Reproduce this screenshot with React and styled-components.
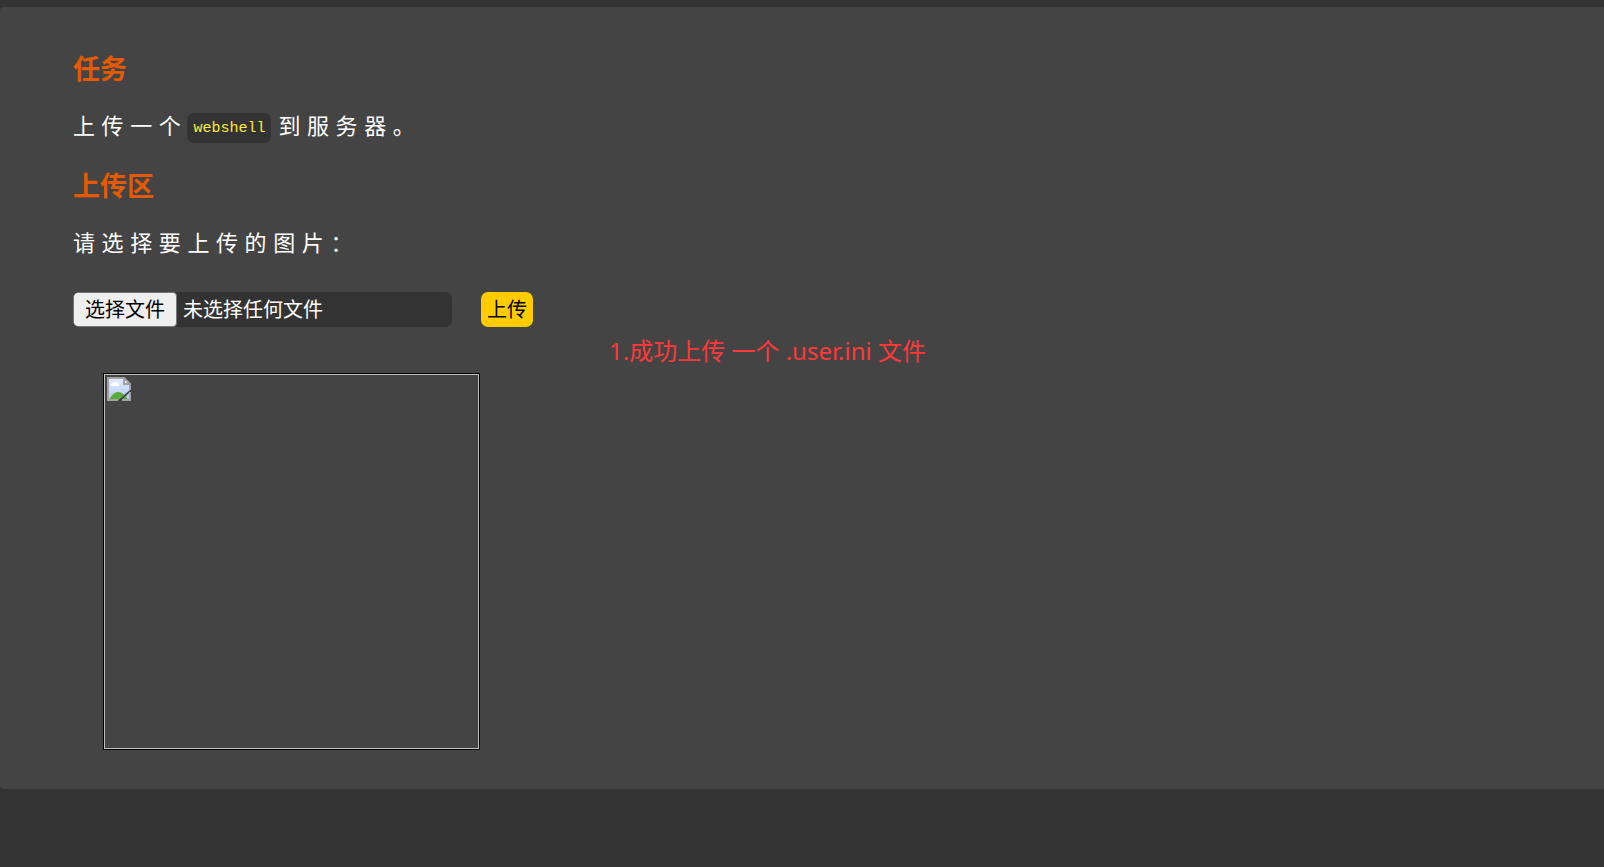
import React, { useState } from "react";
import styled, { createGlobalStyle } from "styled-components";

const sans = `"Noto Sans", "Noto Sans CJK SC", sans-serif`;

const GlobalStyle = createGlobalStyle`
  *, *::before, *::after { box-sizing: border-box; }
  body {
    margin: 0;
    background: #333;
    color: #fff;
    font-family: ${sans};
  }
`;

const Page = styled.div`
  padding: 7px 0 72px;
`;

const Panel = styled.main`
  position: relative;
  padding: 44px 73px 39px;
  background: #444;
  border-radius: 4px 0 0 4px;
`;

const Section = styled.section`
  display: flex;
  flex-direction: column;
  align-items: flex-start;
`;

const Heading = styled.h3`
  margin: 0 0 20px;
  color: #e35b00;
  font-size: 27px;
  line-height: 36px;
  font-weight: 700;
`;

const Text = styled.p`
  display: flex;
  align-items: flex-end;
  margin: 0 0 ${({ $gap }) => $gap}px;
  font-size: 22px;
  line-height: 36px;
  letter-spacing: 0.3em;
`;

const Code = styled.code`
  height: 30px;
  margin-right: 7px;
  padding: 0 6px;
  border-radius: 7px;
  background: #333;
  color: #ffeb3b;
  font-family: "Liberation Mono", monospace;
  font-size: 15px;
  line-height: 32px;
  letter-spacing: normal;
`;

const UploadForm = styled.form`
  display: flex;
  align-items: center;
  gap: 29px;
  margin-bottom: 46px;
  font-size: 20px;
`;

const FileField = styled.label`
  display: flex;
  align-items: center;
  width: 379px;
  height: 35px;
  border-radius: 7px;
  background: #333;
  overflow: hidden;
  cursor: pointer;
`;

const FileInput = styled.input`
  position: absolute;
  width: 1px;
  height: 1px;
  opacity: 0;
`;

const FileButton = styled.span`
  padding: 0 11px;
  border: 1px solid #767676;
  border-radius: 4px;
  background: #efefef;
  color: #000;
  line-height: 33px;
`;

const FileName = styled.span`
  padding-left: 6px;
  line-height: 33px;
`;

const SubmitButton = styled.button`
  height: 35px;
  padding: 0 6px;
  border: 0;
  border-radius: 7px;
  background: #fc0;
  color: #000;
  font: inherit;
  line-height: 35px;
  cursor: pointer;
`;

const Preview = styled.div`
  width: 377px;
  height: 377px;
  margin-left: 30px;
  padding: 2px;
  border: 1px solid #000;
  box-shadow: inset 0 0 0 1px #c0c0c0;

  svg { display: block; margin: 1px; }
`;

const Note = styled.p`
  position: absolute;
  top: 326px;
  left: 609px;
  margin: 0;
  color: #ff3838;
  font-size: 24px;
  line-height: 36px;
  white-space: nowrap;
`;

function BrokenImage() {
  return (
    <svg width="24" height="24" viewBox="0 0 24 24" role="img" aria-label="图片">
      <defs>
        <linearGradient id="sky" x1="0" y1="0" x2="0" y2="1">
          <stop offset="0" stopColor="#e2eaff" />
          <stop offset="1" stopColor="#b4cdf5" />
        </linearGradient>
      </defs>
      <path d="M1 1H17L23 7V13L11 23H1Z" fill="url(#sky)" />
      <path d="M4 8a2 2 0 0 1 2-2 3 3 0 0 1 5 0 2 2 0 0 1 1 3H4Z" fill="#fff" />
      <path d="M2 23Q6 15 11 15Q15 15 17 18L11 23Z" fill="#59ad35" />
      <path d="M17 1V7H23Z" fill="#f5f5f5" />
      <path d="M11 23H1V1H17L23 7V13M17 1V7H23" fill="none" stroke="#a2a2a2" strokeWidth="2" />
      <path d="M23 15V23H15Z" fill="#b7d1f4" />
      <path d="M15 23L19 19L21 23Z" fill="#59ad35" />
      <path d="M23 15V23H15" fill="none" stroke="#a2a2a2" strokeWidth="2" />
    </svg>
  );
}

export default function App() {
  const [fileName, setFileName] = useState("");

  return (
    <Page>
      <GlobalStyle />
      <Panel>
        <Section>
          <Heading>任务</Heading>
          <Text $gap={25}>
            上传一个<Code>webshell</Code>到服务器。
          </Text>
        </Section>
        <Section>
          <Heading>上传区</Heading>
          <Text $gap={32}>请选择要上传的图片：</Text>
          <UploadForm onSubmit={(event) => event.preventDefault()}>
            <FileField>
              <FileInput
                type="file"
                onChange={(event) => setFileName(event.target.files[0]?.name ?? "")}
              />
              <FileButton>选择文件</FileButton>
              <FileName>{fileName || "未选择任何文件"}</FileName>
            </FileField>
            <SubmitButton type="submit">上传</SubmitButton>
          </UploadForm>
          <Preview>
            <BrokenImage />
          </Preview>
        </Section>
        <Note>1.成功上传 一个 .user.ini 文件</Note>
      </Panel>
    </Page>
  );
}
